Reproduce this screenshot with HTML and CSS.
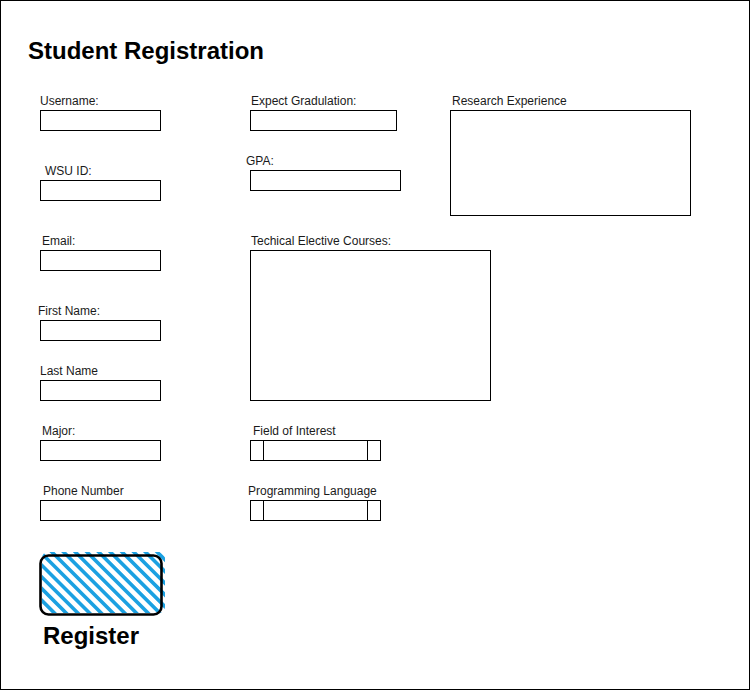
FILE: index.html
```html
<!DOCTYPE html>
<html lang="en">
<head>
<meta charset="utf-8">
<title>Student Registration</title>
<link rel="stylesheet" href="styles.css">
</head>
<body>
<div class="frame">
  <h1 class="title">Student Registration</h1>
  <div class="form">
    <div class="col-left">
      <div class="field">
        <span class="label o-m1">Username:</span>
        <div class="input w121"></div>
      </div>
      <div class="field gap-lg">
        <span class="label o-4">WSU ID:</span>
        <div class="input w121"></div>
      </div>
      <div class="field gap-lg">
        <span class="label o-1">Email:</span>
        <div class="input w121"></div>
      </div>
      <div class="field gap-lg">
        <span class="label o-m3">First Name:</span>
        <div class="input w121"></div>
      </div>
      <div class="field gap-sm">
        <span class="label o-m1">Last Name</span>
        <div class="input w121"></div>
      </div>
      <div class="field gap-sm">
        <span class="label o-1">Major:</span>
        <div class="input w121"></div>
      </div>
      <div class="field gap-sm">
        <span class="label o-2">Phone Number</span>
        <div class="input w121"></div>
      </div>
    </div>

    <div class="col-right">
      <div class="top-row">
        <div class="col-mid">
          <div class="field">
            <span class="label">Expect Gradulation:</span>
            <div class="input w147"></div>
          </div>
          <div class="field gap-sm">
            <span class="label o-m5">GPA:</span>
            <div class="input w151"></div>
          </div>
        </div>
        <div class="field">
          <span class="label o-1">Research Experience</span>
          <div class="input area-research"></div>
        </div>
      </div>
      <div class="field gap-tech">
        <span class="label">Techical Elective Courses:</span>
        <div class="input area-tech"></div>
      </div>
      <div class="field gap-sm">
        <span class="label o-2">Field of Interest</span>
        <div class="select">
          <span class="cap cap-left"></span>
          <span class="select-body"></span>
          <span class="cap cap-right"></span>
        </div>
      </div>
      <div class="field gap-sm">
        <span class="label o-m3">Programming Language</span>
        <div class="select">
          <span class="cap cap-left"></span>
          <span class="select-body"></span>
          <span class="cap cap-right"></span>
        </div>
      </div>
    </div>
  </div>

  <div class="submit">
    <svg class="submit-btn" width="130" height="66" viewBox="0 0 130 66" aria-hidden="true">
      <defs>
        <clipPath id="hatch-clip">
          <rect x="4" y="2" width="123" height="61" rx="6"/>
        </clipPath>
      </defs>
      <g clip-path="url(#hatch-clip)" stroke="#1ba1e2" stroke-width="3.6" stroke-linecap="round">
        <line x1="-70" y1="0" x2="0" y2="70"/>
        <line x1="-58.3" y1="0" x2="11.7" y2="70"/>
        <line x1="-46.6" y1="0" x2="23.4" y2="70"/>
        <line x1="-34.9" y1="0" x2="35.1" y2="70"/>
        <line x1="-23.2" y1="0" x2="46.8" y2="70"/>
        <line x1="-11.5" y1="0" x2="58.5" y2="70"/>
        <line x1="0.2" y1="0" x2="70.2" y2="70"/>
        <line x1="11.9" y1="0" x2="81.9" y2="70"/>
        <line x1="23.6" y1="0" x2="93.6" y2="70"/>
        <line x1="35.3" y1="0" x2="105.3" y2="70"/>
        <line x1="47" y1="0" x2="117" y2="70"/>
        <line x1="58.7" y1="0" x2="128.7" y2="70"/>
        <line x1="70.4" y1="0" x2="140.4" y2="70"/>
        <line x1="82.1" y1="0" x2="152.1" y2="70"/>
        <line x1="93.8" y1="0" x2="163.8" y2="70"/>
        <line x1="105.5" y1="0" x2="175.5" y2="70"/>
        <line x1="117.2" y1="0" x2="187.2" y2="70"/>
        <line x1="128.9" y1="0" x2="198.9" y2="70"/>
      </g>
      <rect x="2.5" y="5.5" width="121" height="59" rx="8" fill="none" stroke="#000" stroke-width="2.6"/>
    </svg>
    <span class="submit-label">Register</span>
  </div>
</div>
</body>
</html>
```

FILE: styles.css
```css
* {
  box-sizing: border-box;
}

html, body {
  margin: 0;
  padding: 0;
  background: #fff;
}

body {
  font-family: "Liberation Sans", Arial, Helvetica, sans-serif;
  color: #000;
}

.frame {
  width: 750px;
  height: 690px;
  border: 1px solid #000;
  padding: 36px 0 0 27px;
  background: #fff;
}

.title {
  margin: 0;
  font-size: 24px;
  line-height: 28px;
  font-weight: bold;
}

.form {
  display: flex;
  align-items: flex-start;
  margin: 29px 0 0 12px;
}

.col-left {
  display: flex;
  flex-direction: column;
  width: 121px;
}

.col-right {
  display: flex;
  flex-direction: column;
  margin-left: 89px;
}

.top-row {
  display: flex;
  align-items: flex-start;
}

.col-mid {
  display: flex;
  flex-direction: column;
  width: 200px;
}

.field {
  display: flex;
  flex-direction: column;
  align-items: flex-start;
}

.gap-lg { margin-top: 33px; }
.gap-sm { margin-top: 23px; }
.gap-tech { margin-top: 18px; }

.label {
  display: block;
  font-size: 12px;
  line-height: 14px;
  margin-bottom: 2px;
  padding-left: 1px;
  white-space: nowrap;
  color: #1a1a1a;
}

.o-m5 { margin-left: -5px; }
.o-m3 { margin-left: -3px; }
.o-m1 { margin-left: -1px; }
.o-1 { margin-left: 1px; }
.o-2 { margin-left: 2px; }
.o-4 { margin-left: 4px; }

.input {
  border: 1px solid #000;
  background: #fff;
  height: 21px;
}

.w121 { width: 121px; }
.w147 { width: 147px; }
.w151 { width: 151px; }

.area-research {
  width: 241px;
  height: 106px;
}

.area-tech {
  width: 241px;
  height: 151px;
}

.select {
  display: flex;
  width: 131px;
  height: 21px;
  border: 1px solid #000;
  background: #fff;
}

.cap {
  width: 13px;
  height: 100%;
}

.cap-left { border-right: 1px solid #000; }
.cap-right { border-left: 1px solid #000; }

.select-body {
  flex: 1;
}

.submit {
  display: flex;
  flex-direction: column;
  align-items: flex-start;
  margin: 29px 0 0 10px;
}

.submit-btn {
  display: block;
}

.submit-label {
  display: block;
  margin: 6px 0 0 5px;
  font-size: 24px;
  line-height: 28px;
  font-weight: bold;
}
```
